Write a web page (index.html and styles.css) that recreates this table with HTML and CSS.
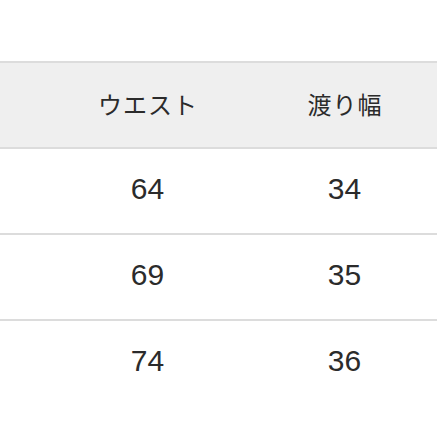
FILE: index.html
```html
<!DOCTYPE html>
<html lang="ja">
<head>
<meta charset="utf-8">
<link rel="stylesheet" href="styles.css">
</head>
<body>
<div class="size-table">
  <div class="row head">
    <div class="cell"></div>
    <div class="cell jp">ウエスト</div>
    <div class="cell jp">渡り幅</div>
  </div>
  <div class="row">
    <div class="cell"></div>
    <div class="cell num">64</div>
    <div class="cell num">34</div>
  </div>
  <div class="row">
    <div class="cell"></div>
    <div class="cell num">69</div>
    <div class="cell num">35</div>
  </div>
  <div class="row last">
    <div class="cell"></div>
    <div class="cell num">74</div>
    <div class="cell num">36</div>
  </div>
</div>
</body>
</html>
```
FILE: styles.css
```css
html, body {
  margin: 0;
  padding: 0;
  background: #ffffff;
  overflow: hidden;
}
body {
  width: 437px;
  height: 437px;
  font-family: "Liberation Sans", "Noto Sans CJK JP", sans-serif;
  color: #2b2b2b;
}
.size-table {
  margin-top: 61px;
  width: 443px;
}
.row {
  display: grid;
  grid-template-columns: 49px 197px 197px;
  height: 84px;
  border-top: 2px solid #dcdcdc;
}
.row.head {
  background: #efefef;
  border-bottom: 2px solid #dcdcdc;
}
.row.head + .row {
  border-top: none;
}
.cell {
  display: flex;
  align-items: center;
  justify-content: center;
}
.jp {
  font-family: "Noto Sans CJK JP", sans-serif;
  font-size: 24px;
  letter-spacing: 1px;
  padding-left: 1px;
  margin-top: -4px;
}
.num {
  font-size: 30px;
  margin-top: -4px;
}
```
